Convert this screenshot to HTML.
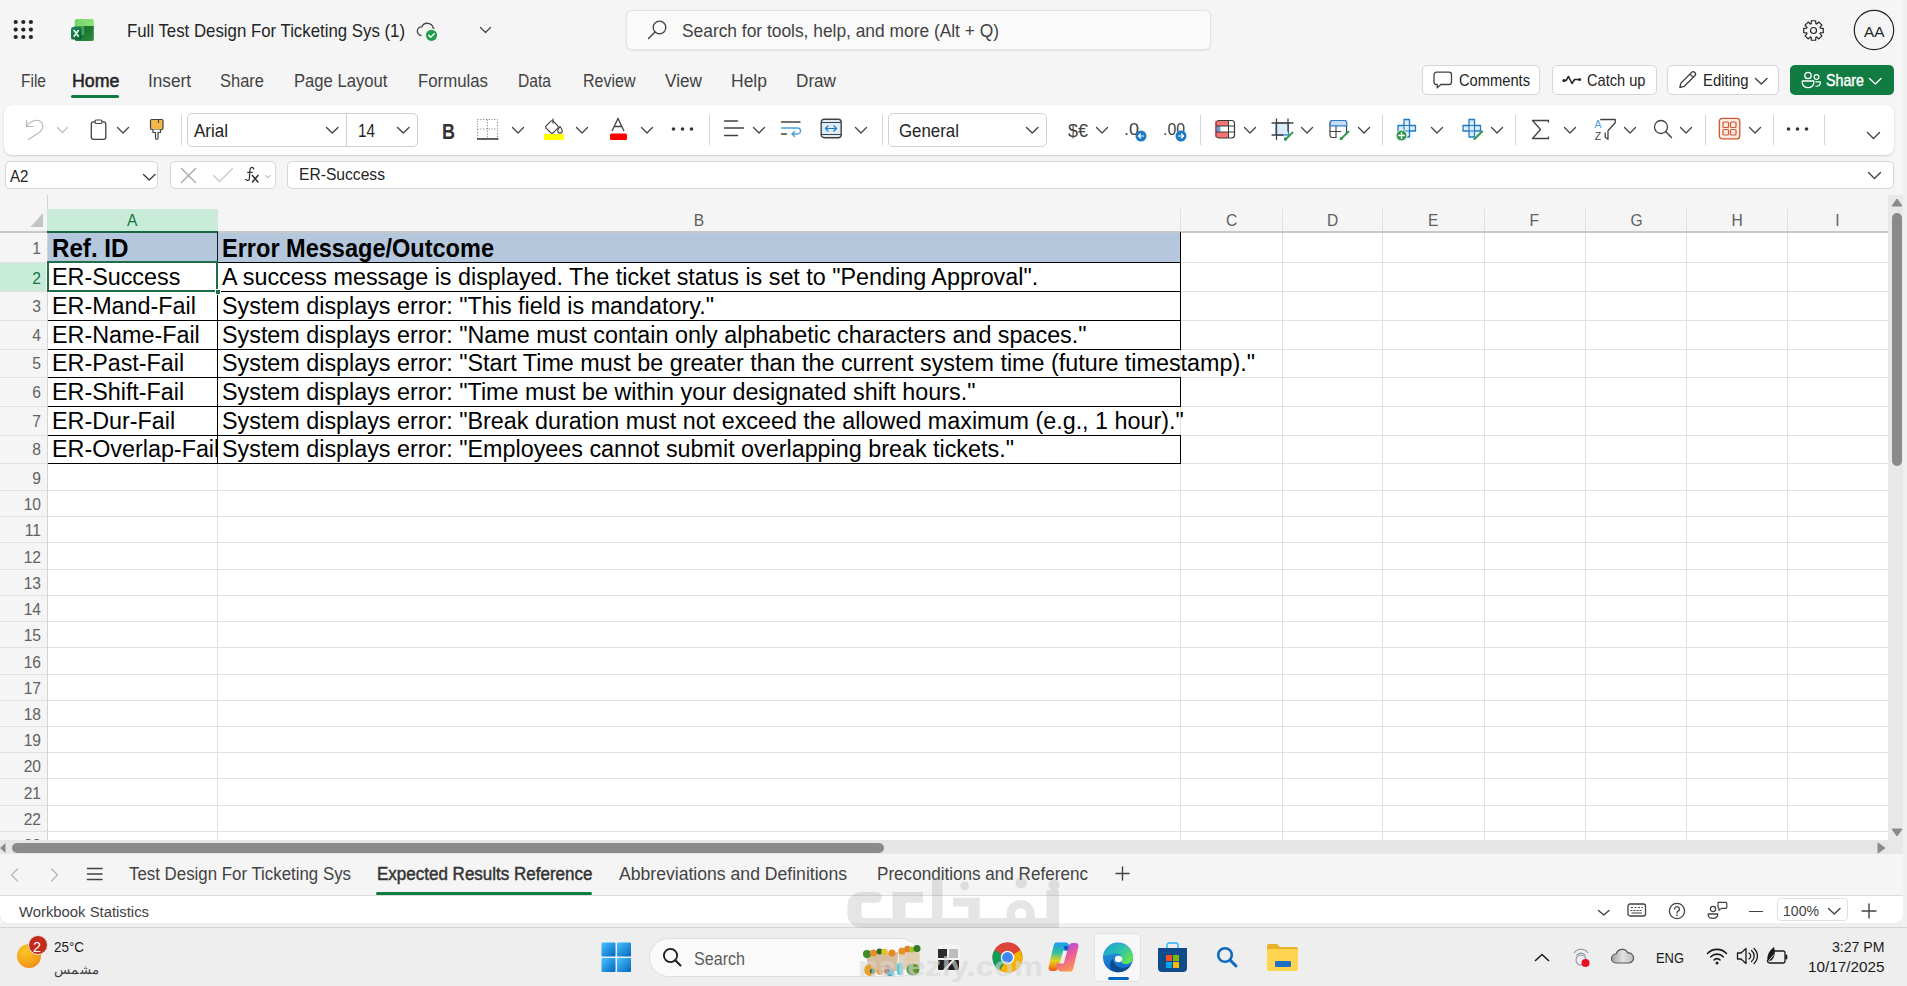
<!DOCTYPE html>
<html><head><meta charset="utf-8"><title>Excel</title><style>
*{box-sizing:border-box;margin:0;padding:0}
html,body{width:1907px;height:986px;overflow:hidden;background:#f5f5f5;font-family:"Liberation Sans",sans-serif;color:#242424;position:relative}
.a{position:absolute}
.t{position:absolute;white-space:nowrap;line-height:1;transform-origin:0 0}
svg{position:absolute;overflow:visible}
</style></head><body>
<svg style="left:0px;top:0px;" width="50" height="50" viewBox="0 0 50 50"><circle cx="15.7" cy="22" r="2.1" fill="#242424"/><circle cx="15.7" cy="29.6" r="2.1" fill="#242424"/><circle cx="15.7" cy="37" r="2.1" fill="#242424"/><circle cx="23.3" cy="22" r="2.1" fill="#242424"/><circle cx="23.3" cy="29.6" r="2.1" fill="#242424"/><circle cx="23.3" cy="37" r="2.1" fill="#242424"/><circle cx="30.9" cy="22" r="2.1" fill="#242424"/><circle cx="30.9" cy="29.6" r="2.1" fill="#242424"/><circle cx="30.9" cy="37" r="2.1" fill="#242424"/></svg>
<svg style="left:70px;top:18px;" width="26" height="26" viewBox="0 0 26 26"><defs><linearGradient id="xl1" x1="0" y1="0" x2="1" y2="0"><stop offset="0" stop-color="#74d36a"/><stop offset="1" stop-color="#8fe47c"/></linearGradient>
<linearGradient id="xl2" x1="0" y1="0" x2="1" y2="1"><stop offset="0" stop-color="#0f6b2a"/><stop offset="1" stop-color="#2f8b3b"/></linearGradient>
<linearGradient id="xl3" x1="0" y1="0" x2="1" y2="1"><stop offset="0" stop-color="#1e8a55"/><stop offset="1" stop-color="#0c5a32"/></linearGradient></defs>
<path d="M6.5 1 h15.5 a1.8 1.8 0 0 1 1.8 1.8 v5.2 h-19.1 v-5.2 a1.8 1.8 0 0 1 1.8 -1.8z" fill="url(#xl1)"/>
<path d="M4.7 8 h19.1 v13.3 a1.8 1.8 0 0 1 -1.8 1.8 h-15.5 a1.8 1.8 0 0 1 -1.8 -1.8z" fill="url(#xl2)"/>
<rect x="4.7" y="8" width="9.5" height="9" fill="#3fa55a"/>
<rect x="1" y="9" width="10.5" height="12.6" rx="2.2" fill="url(#xl3)"/>
<path d="M4.2 12.5 L8.3 18.3 M8.3 12.5 L4.2 18.3" stroke="#e8fff0" stroke-width="1.6" stroke-linecap="round"/></svg>
<div class="t" id="t0" style="left:127px;top:21.84px;font-size:18.5px;color:#242424;font-weight:normal;transform:scaleX(0.9084);">Full Test Design For Ticketing Sys (1)</div>
<svg style="left:416px;top:20px;" width="24" height="22" viewBox="0 0 24 22">
<path d="M5.5 15.5 a4.3 4.3 0 0 1 0.3 -8.6 a6 6 0 0 1 11.4 1.2 a3.6 3.6 0 0 1 1.3 .3" fill="none" stroke="#424242" stroke-width="1.3"/>
<circle cx="15.5" cy="15.3" r="5.6" fill="#1f9e4f"/>
<path d="M12.8 15.4 l1.9 1.9 l3.5 -3.5" fill="none" stroke="#fff" stroke-width="1.5" stroke-linecap="round" stroke-linejoin="round"/>
</svg>
<svg style="left:480px;top:27px;" width="11" height="6" viewBox="0 0 11 6"><path d="M0.5 0.5 L5.5 5.5 L10.5 0.5" fill="none" stroke="#424242" stroke-width="1.2" stroke-linecap="round" stroke-linejoin="round"/></svg>
<div class="a" style="left:626px;top:10px;width:585px;height:40px;background:#fafafa;border:1px solid #e3e3e3;border-radius:6px;box-shadow:0 1px 2px rgba(0,0,0,0.08)"></div>
<svg style="left:647px;top:20px;" width="22" height="22" viewBox="0 0 22 22"><circle cx="12.5" cy="7.5" r="6.3" fill="none" stroke="#424242" stroke-width="1.3"/><path d="M8 12 L1.5 18.5" stroke="#424242" stroke-width="1.4" stroke-linecap="round"/></svg>
<div class="t" id="t1" style="left:682px;top:22.44px;font-size:18.5px;color:#424242;font-weight:normal;transform:scaleX(0.9385);">Search for tools, help, and more (Alt + Q)</div>
<svg style="left:1803px;top:19.5px;" width="22" height="22" viewBox="0 0 22 22"><polygon points="20.26,8.32 20.26,12.68 17.31,12.83 16.97,13.67 18.94,15.86 15.86,18.94 13.67,16.97 12.83,17.31 12.68,20.26 8.32,20.26 8.17,17.31 7.33,16.97 5.14,18.94 2.06,15.86 4.03,13.67 3.69,12.83 0.74,12.68 0.74,8.32 3.69,8.17 4.03,7.33 2.06,5.14 5.14,2.06 7.33,4.03 8.17,3.69 8.32,0.74 12.68,0.74 12.83,3.69 13.67,4.03 15.86,2.06 18.94,5.14 16.97,7.33 17.31,8.17" fill="none" stroke="#242424" stroke-width="1.2" stroke-linejoin="round"/><circle cx="10.5" cy="10.5" r="3" fill="none" stroke="#242424" stroke-width="1.2"/></svg>
<svg style="left:1853px;top:9px;" width="42" height="42" viewBox="0 0 42 42"><circle cx="21" cy="21" r="19.7" fill="none" stroke="#242424" stroke-width="1.2"/></svg>
<div class="t" id="t2" style="left:1864px;top:24.00px;font-size:15px;color:#242424;font-weight:normal;transform:scaleX(1.0242);">AA</div>
<div class="t" id="t3" style="left:21px;top:72.69px;font-size:17.5px;color:#424242;font-weight:normal;transform:scaleX(0.8864);">File</div>
<div class="t" id="t4" style="left:71.5px;top:72.69px;font-size:17.5px;color:#242424;font-weight:normal;transform:scaleX(1.0174);-webkit-text-stroke:0.5px #242424;">Home</div>
<div class="t" id="t5" style="left:148px;top:72.69px;font-size:17.5px;color:#424242;font-weight:normal;transform:scaleX(0.9822);">Insert</div>
<div class="t" id="t6" style="left:220px;top:72.69px;font-size:17.5px;color:#424242;font-weight:normal;transform:scaleX(0.9421);">Share</div>
<div class="t" id="t7" style="left:293.5px;top:72.69px;font-size:17.5px;color:#424242;font-weight:normal;transform:scaleX(0.9514);">Page Layout</div>
<div class="t" id="t8" style="left:418px;top:72.69px;font-size:17.5px;color:#424242;font-weight:normal;transform:scaleX(0.9597);">Formulas</div>
<div class="t" id="t9" style="left:518px;top:72.69px;font-size:17.5px;color:#424242;font-weight:normal;transform:scaleX(0.8926);">Data</div>
<div class="t" id="t10" style="left:583px;top:72.69px;font-size:17.5px;color:#424242;font-weight:normal;transform:scaleX(0.9148);">Review</div>
<div class="t" id="t11" style="left:665px;top:72.69px;font-size:17.5px;color:#424242;font-weight:normal;transform:scaleX(0.9834);">View</div>
<div class="t" id="t12" style="left:731px;top:72.69px;font-size:17.5px;color:#424242;font-weight:normal;">Help</div>
<div class="t" id="t13" style="left:796px;top:72.69px;font-size:17.5px;color:#424242;font-weight:normal;transform:scaleX(0.9793);">Draw</div>
<div class="a" style="left:71px;top:95px;width:48px;height:3.2px;background:#107c41;border-radius:2px"></div>
<div class="a" style="left:4px;top:105px;width:1890px;height:50px;background:#fff;border-radius:8px;box-shadow:0 1px 2px rgba(0,0,0,0.14),0 0 1px rgba(0,0,0,0.10)"></div>
<svg style="left:25px;top:118px;" width="20" height="22" viewBox="0 0 20 22"><path d="M1.5 2.5 v6 h6.5" fill="none" stroke="#b8b8b8" stroke-width="1.2" stroke-linecap="round" stroke-linejoin="round"/><path d="M1.8 8.3 C4.5 3.5 11 0.5 15.5 3.5 C19 6 18.5 10.5 15.5 13.5 L3.5 21.5" fill="none" stroke="#b8b8b8" stroke-width="1.2" stroke-linecap="round"/></svg>
<svg style="left:57px;top:127.3px;" width="11" height="6" viewBox="0 0 11 6"><path d="M0.5 0.5 L5.5 5.5 L10.5 0.5" fill="none" stroke="#bdbdbd" stroke-width="1.2" stroke-linecap="round" stroke-linejoin="round"/></svg>
<svg style="left:90px;top:119px;" width="18" height="22" viewBox="0 0 18 22"><rect x="1.3" y="2.8" width="14.5" height="17.5" rx="2" fill="none" stroke="#424242" stroke-width="1.3"/><rect x="5" y="1" width="7" height="3.5" rx="1.2" fill="#fff" stroke="#424242" stroke-width="1.2"/></svg>
<svg style="left:117px;top:126.8px;" width="12" height="6.5" viewBox="0 0 12 6.5"><path d="M0.5 0.5 L6.0 6.0 L11.5 0.5" fill="none" stroke="#424242" stroke-width="1.3" stroke-linecap="round" stroke-linejoin="round"/></svg>
<svg style="left:149px;top:118px;" width="16" height="23" viewBox="0 0 16 23"><rect x="1.5" y="1.5" width="12.5" height="10" rx="1.2" fill="#f2b84a" stroke="#424242" stroke-width="1.2"/><path d="M9.5 1.5 v3.5" stroke="#424242" stroke-width="1.1"/><path d="M4 11.5 v3 h2.5 v5.5 a1.2 1.2 0 0 0 2.5 0 v-5.5 h2.5 v-3" fill="#fff" stroke="#424242" stroke-width="1.2" stroke-linejoin="round"/></svg>
<div class="a" style="left:181px;top:115px;width:1px;height:30px;background:#d6d6d6"></div>
<div class="a" style="left:187px;top:113px;width:231px;height:34px;border:1px solid #d1d1d1;border-radius:5px;background:#fff"></div>
<div class="a" style="left:346px;top:114px;width:1px;height:32px;background:#d1d1d1"></div>
<div class="t" id="t14" style="left:193.5px;top:122.44px;font-size:18.5px;color:#242424;font-weight:normal;transform:scaleX(0.9185);">Arial</div>
<svg style="left:325.5px;top:127.3px;" width="12.5" height="6.5" viewBox="0 0 12.5 6.5"><path d="M0.5 0.5 L6.25 6.0 L12.0 0.5" fill="none" stroke="#424242" stroke-width="1.4" stroke-linecap="round" stroke-linejoin="round"/></svg>
<div class="t" id="t15" style="left:358px;top:122.44px;font-size:18.5px;color:#242424;font-weight:normal;transform:scaleX(0.8261);">14</div>
<svg style="left:396.5px;top:127.3px;" width="12.5" height="6.5" viewBox="0 0 12.5 6.5"><path d="M0.5 0.5 L6.25 6.0 L12.0 0.5" fill="none" stroke="#424242" stroke-width="1.4" stroke-linecap="round" stroke-linejoin="round"/></svg>
<div class="t" id="t16" style="left:442px;top:120.68px;font-size:22px;color:#333;font-weight:bold;transform:scaleX(0.8181);">B</div>
<svg style="left:476px;top:118px;" width="24" height="24" viewBox="0 0 24 24"><g stroke="#8a8a8a" stroke-width="1" stroke-dasharray="1.2 1.6" fill="none"><rect x="1.5" y="1.5" width="20" height="19"/><path d="M11.5 1.5 v19 M1.5 11 h20"/></g><path d="M1 21 h21.5" stroke="#424242" stroke-width="1.6"/></svg>
<svg style="left:512px;top:127.3px;" width="12" height="6.5" viewBox="0 0 12 6.5"><path d="M0.5 0.5 L6.0 6.0 L11.5 0.5" fill="none" stroke="#424242" stroke-width="1.3" stroke-linecap="round" stroke-linejoin="round"/></svg>
<svg style="left:543px;top:117px;" width="22" height="25" viewBox="0 0 22 25"><path d="M10 1.5 v5" stroke="#424242" stroke-width="1.2"/><rect x="4" y="5" width="10" height="10" rx="2" transform="rotate(45 9 10)" fill="none" stroke="#424242" stroke-width="1.2"/><path d="M17 9.5 c-1.5 2 -2.3 3.3 -2.3 4.3 a2.3 2.3 0 0 0 4.6 0 c0 -1 -.8 -2.3 -2.3 -4.3z" fill="none" stroke="#424242" stroke-width="1.1"/><rect x="1" y="17" width="20" height="6" rx="1" fill="#ffff00"/></svg>
<svg style="left:576px;top:127.3px;" width="12" height="6.5" viewBox="0 0 12 6.5"><path d="M0.5 0.5 L6.0 6.0 L11.5 0.5" fill="none" stroke="#424242" stroke-width="1.3" stroke-linecap="round" stroke-linejoin="round"/></svg>
<svg style="left:608px;top:117px;" width="22" height="25" viewBox="0 0 22 25"><path d="M4 14 L10 1.5 L16 14 M6.2 9.5 h7.6" fill="none" stroke="#424242" stroke-width="1.3"/><rect x="2" y="16.5" width="17" height="6.5" rx="1.5" fill="#ff0000"/></svg>
<svg style="left:641px;top:127.3px;" width="12" height="6.5" viewBox="0 0 12 6.5"><path d="M0.5 0.5 L6.0 6.0 L11.5 0.5" fill="none" stroke="#424242" stroke-width="1.3" stroke-linecap="round" stroke-linejoin="round"/></svg>
<svg style="left:670px;top:126px;" width="26" height="6" viewBox="0 0 26 6"><circle cx="3.5" cy="3" r="1.8" fill="#333"/><circle cx="12.5" cy="3" r="1.8" fill="#333"/><circle cx="21.5" cy="3" r="1.8" fill="#333"/></svg>
<div class="a" style="left:709px;top:115px;width:1px;height:30px;background:#d6d6d6"></div>
<svg style="left:723px;top:119px;" width="22" height="20" viewBox="0 0 22 20"><path d="M1.5 2 h13 M1.5 9 h19 M1.5 16.5 h13" stroke="#424242" stroke-width="1.4" stroke-linecap="round"/></svg>
<svg style="left:753px;top:127.3px;" width="12" height="6.5" viewBox="0 0 12 6.5"><path d="M0.5 0.5 L6.0 6.0 L11.5 0.5" fill="none" stroke="#424242" stroke-width="1.3" stroke-linecap="round" stroke-linejoin="round"/></svg>
<svg style="left:780px;top:120px;" width="24" height="20" viewBox="0 0 24 20"><path d="M1.5 2 h18.5 M1.5 14 h5" stroke="#424242" stroke-width="1.4" stroke-linecap="round"/><path d="M1.5 8 h16 a3 3 0 0 1 0 6 h-5.5 M14.5 11.5 l-2.5 2.5 l2.5 2.5" fill="none" stroke="#4aa0d8" stroke-width="1.4" stroke-linecap="round" stroke-linejoin="round"/></svg>
<svg style="left:820px;top:118px;" width="24" height="22" viewBox="0 0 24 22"><rect x="1.2" y="1.2" width="20" height="18.5" rx="3" fill="#dcecf8" stroke="#424242" stroke-width="1.4"/><path d="M1.2 4.5 h20 M1.2 16.5 h20" stroke="#424242" stroke-width="1.2"/><path d="M5.5 10.5 h11 M8 8 l-2.5 2.5 l2.5 2.5 M14 8 l2.5 2.5 l-2.5 2.5" fill="none" stroke="#1f7ac4" stroke-width="1.2" stroke-linecap="round" stroke-linejoin="round"/></svg>
<svg style="left:855px;top:127.3px;" width="12" height="6.5" viewBox="0 0 12 6.5"><path d="M0.5 0.5 L6.0 6.0 L11.5 0.5" fill="none" stroke="#424242" stroke-width="1.3" stroke-linecap="round" stroke-linejoin="round"/></svg>
<div class="a" style="left:882px;top:115px;width:1px;height:30px;background:#d6d6d6"></div>
<div class="a" style="left:888px;top:113px;width:159px;height:34px;border:1px solid #d1d1d1;border-radius:5px;background:#fff"></div>
<div class="t" id="t17" style="left:898.5px;top:122.44px;font-size:18.5px;color:#242424;font-weight:normal;transform:scaleX(0.9115);">General</div>
<svg style="left:1026px;top:127.3px;" width="12.5" height="6.5" viewBox="0 0 12.5 6.5"><path d="M0.5 0.5 L6.25 6.0 L12.0 0.5" fill="none" stroke="#424242" stroke-width="1.4" stroke-linecap="round" stroke-linejoin="round"/></svg>
<div class="t" id="t18" style="left:1067.5px;top:121.42px;font-size:19px;color:#424242;font-weight:normal;transform:scaleX(0.9460);">$€</div>
<svg style="left:1096px;top:127.3px;" width="12" height="6.5" viewBox="0 0 12 6.5"><path d="M0.5 0.5 L6.0 6.0 L11.5 0.5" fill="none" stroke="#424242" stroke-width="1.3" stroke-linecap="round" stroke-linejoin="round"/></svg>
<div class="t" id="t19" style="left:1124px;top:121.11px;font-size:17px;color:#424242;font-weight:normal;transform:scaleX(1.0573);">.0</div>
<svg style="left:1135px;top:130px;" width="12" height="12" viewBox="0 0 12 12"><circle cx="6" cy="6" r="5.5" fill="#1f7ac4"/><path d="M8.5 6 h-5 M5.5 4 l-2 2 l2 2" fill="none" stroke="#fff" stroke-width="1.2" stroke-linecap="round" stroke-linejoin="round"/></svg>
<div class="t" id="t20" style="left:1163px;top:121.11px;font-size:17px;color:#424242;font-weight:normal;transform:scaleX(0.9306);">.00</div>
<svg style="left:1175px;top:130px;" width="12" height="12" viewBox="0 0 12 12"><circle cx="6" cy="6" r="5.5" fill="#1f7ac4"/><path d="M3.5 6 h5 M6.5 4 l2 2 l-2 2" fill="none" stroke="#fff" stroke-width="1.2" stroke-linecap="round" stroke-linejoin="round"/></svg>
<div class="a" style="left:1200px;top:115px;width:1px;height:30px;background:#d6d6d6"></div>
<svg style="left:1215px;top:119px;" width="21" height="21" viewBox="0 0 21 21"><rect x="1" y="1.5" width="18.5" height="17.5" rx="3" fill="#fff"/><path d="M4 1.5 h9.5 v5.5 h-12.5 v-2.5 a3 3 0 0 1 3 -3z M1 13 h12.5 v6 h-9.5 a3 3 0 0 1 -3 -3z" fill="#f47373"/><rect x="1.4" y="7" width="4" height="6" fill="#5aa7e0"/><rect x="1" y="1.5" width="18.5" height="17.5" rx="3" fill="none" stroke="#3a3a3a" stroke-width="1.2"/><path d="M1 1.8 v16.5" stroke="#d9484c" stroke-width="1.3"/><path d="M1 7 h18.5 M1 13 h18.5 M13.5 1.5 v17.5" stroke="#3a3a3a" stroke-width="1"/></svg>
<svg style="left:1244px;top:127.3px;" width="12" height="6.5" viewBox="0 0 12 6.5"><path d="M0.5 0.5 L6.0 6.0 L11.5 0.5" fill="none" stroke="#424242" stroke-width="1.3" stroke-linecap="round" stroke-linejoin="round"/></svg>
<svg style="left:1271px;top:118px;" width="24" height="24" viewBox="0 0 24 24"><rect x="5" y="5" width="12.5" height="12" fill="#dcecf8" stroke="#2b7cd0" stroke-width="1.2"/><path d="M5.5 1 v20.5 M17 1 v12 M1 5 h21 M1 17 h11" stroke="#424242" stroke-width="1.3" stroke-linecap="round"/><path d="M14.5 21.5 l7 -7" stroke="#2e9a4d" stroke-width="1.8" stroke-linecap="round"/><circle cx="14.5" cy="21" r="1.7" fill="#2e9a4d"/></svg>
<svg style="left:1301px;top:127.3px;" width="12" height="6.5" viewBox="0 0 12 6.5"><path d="M0.5 0.5 L6.0 6.0 L11.5 0.5" fill="none" stroke="#424242" stroke-width="1.3" stroke-linecap="round" stroke-linejoin="round"/></svg>
<svg style="left:1329px;top:119px;" width="23" height="23" viewBox="0 0 23 23"><path d="M3.5 1.5 h11.5 a2.5 2.5 0 0 1 2.5 2.5 v11.5 M1 4 a2.5 2.5 0 0 1 2.5 -2.5" fill="none" stroke="#424242" stroke-width="1.2"/><rect x="1" y="13" width="0.1" height="0.1"/><path d="M1 4 v12 a2.5 2.5 0 0 0 2.5 2.5 h4" fill="none" stroke="#424242" stroke-width="1.2"/><path d="M1.2 4 a2.5 2.5 0 0 1 2.5 -2.5 h11.5 a2.5 2.5 0 0 1 2.5 2.5 v2.8 h-16.5z" fill="#c7def2" stroke="#2b7cd0" stroke-width="1.2"/><path d="M7 7 v11.5 M1.2 12.5 h11" stroke="#424242" stroke-width="1.1"/><path d="M12 20 l7.5 -7.5" stroke="#2e9a4d" stroke-width="1.8" stroke-linecap="round"/><circle cx="12.2" cy="19.6" r="1.6" fill="#2e9a4d"/></svg>
<svg style="left:1358px;top:127.3px;" width="12" height="6.5" viewBox="0 0 12 6.5"><path d="M0.5 0.5 L6.0 6.0 L11.5 0.5" fill="none" stroke="#424242" stroke-width="1.3" stroke-linecap="round" stroke-linejoin="round"/></svg>
<div class="a" style="left:1382px;top:115px;width:1px;height:30px;background:#d6d6d6"></div>
<svg style="left:1395px;top:118px;" width="25" height="24" viewBox="0 0 25 24"><path d="M9 1.5 h5.5 v6 h6 v5.5 h-6 v6 h-5.5 v-6 h-6 v-5.5 h6z" fill="#dcecf8" stroke="#1f7ac4" stroke-width="1.3" stroke-linejoin="round"/><path d="M9 7.5 h5.5 v5.5 h-5.5z" fill="none" stroke="#1f7ac4" stroke-width="1.1"/><circle cx="6.5" cy="17.5" r="5.5" fill="#2e9a4d" stroke="#fff" stroke-width="1"/><path d="M6.5 14.8 v5.4 M3.8 17.5 h5.4" stroke="#fff" stroke-width="1.4" stroke-linecap="round"/></svg>
<svg style="left:1431px;top:127.3px;" width="12" height="6.5" viewBox="0 0 12 6.5"><path d="M0.5 0.5 L6.0 6.0 L11.5 0.5" fill="none" stroke="#424242" stroke-width="1.3" stroke-linecap="round" stroke-linejoin="round"/></svg>
<svg style="left:1461px;top:118px;" width="24" height="24" viewBox="0 0 24 24"><path d="M8 1.5 h5.5 v6 h6 v5.5 h-6 v6 h-5.5 v-6 h-6 v-5.5 h6z" fill="#dcecf8" stroke="#1f7ac4" stroke-width="1.3" stroke-linejoin="round"/><path d="M8 7.5 h5.5 v5.5 h-5.5z" fill="none" stroke="#1f7ac4" stroke-width="1.1"/><path d="M13.5 21 l7.5 -7.5" stroke="#2e9a4d" stroke-width="2.2" stroke-linecap="round"/></svg>
<svg style="left:1491px;top:127.3px;" width="12" height="6.5" viewBox="0 0 12 6.5"><path d="M0.5 0.5 L6.0 6.0 L11.5 0.5" fill="none" stroke="#424242" stroke-width="1.3" stroke-linecap="round" stroke-linejoin="round"/></svg>
<div class="a" style="left:1515px;top:115px;width:1px;height:30px;background:#d6d6d6"></div>
<svg style="left:1531px;top:119px;" width="20" height="21" viewBox="0 0 20 21"><path d="M17.5 3.5 v-2 h-16 l8 9 l-8 9 h16 v-2" fill="none" stroke="#424242" stroke-width="1.3" stroke-linejoin="round"/></svg>
<svg style="left:1564px;top:127.3px;" width="12" height="6.5" viewBox="0 0 12 6.5"><path d="M0.5 0.5 L6.0 6.0 L11.5 0.5" fill="none" stroke="#424242" stroke-width="1.3" stroke-linecap="round" stroke-linejoin="round"/></svg>
<svg style="left:1594px;top:117px;" width="24" height="24" viewBox="0 0 24 24"><text x="0.6" y="11" font-family="Liberation Sans" font-size="10.5" fill="#4aa0d8">A</text><text x="0.8" y="22.6" font-family="Liberation Sans" font-size="10.5" fill="#424242">Z</text><path d="M6.2 2.5 h15 v3.2 l-7.2 8 v8.6 l-2.8 -2.4 v-4.5" fill="none" stroke="#424242" stroke-width="1.3" stroke-linejoin="round"/></svg>
<svg style="left:1624px;top:127.3px;" width="12" height="6.5" viewBox="0 0 12 6.5"><path d="M0.5 0.5 L6.0 6.0 L11.5 0.5" fill="none" stroke="#424242" stroke-width="1.3" stroke-linecap="round" stroke-linejoin="round"/></svg>
<svg style="left:1653px;top:119px;" width="20" height="20" viewBox="0 0 20 20"><circle cx="8" cy="8" r="6.5" fill="none" stroke="#424242" stroke-width="1.3"/><path d="M12.8 12.8 L18.5 18.5" stroke="#424242" stroke-width="1.4" stroke-linecap="round"/></svg>
<svg style="left:1680px;top:127.3px;" width="12" height="6.5" viewBox="0 0 12 6.5"><path d="M0.5 0.5 L6.0 6.0 L11.5 0.5" fill="none" stroke="#424242" stroke-width="1.3" stroke-linecap="round" stroke-linejoin="round"/></svg>
<div class="a" style="left:1705px;top:115px;width:1px;height:30px;background:#d6d6d6"></div>
<svg style="left:1718px;top:117px;" width="24" height="24" viewBox="0 0 24 24"><rect x="1.3" y="1.3" width="20.5" height="20.5" rx="3" fill="#fdece4" stroke="#d65532" stroke-width="1.3"/><g fill="none" stroke="#d65532" stroke-width="1.2"><rect x="5" y="5" width="5.5" height="5.5" rx="1"/><rect x="12.5" y="5" width="5.5" height="5.5" rx="1"/><rect x="5" y="12.5" width="5.5" height="5.5" rx="1"/><rect x="12.5" y="12.5" width="5.5" height="5.5" rx="1"/></g></svg>
<svg style="left:1749px;top:127.3px;" width="12" height="6.5" viewBox="0 0 12 6.5"><path d="M0.5 0.5 L6.0 6.0 L11.5 0.5" fill="none" stroke="#424242" stroke-width="1.3" stroke-linecap="round" stroke-linejoin="round"/></svg>
<div class="a" style="left:1773px;top:115px;width:1px;height:30px;background:#d6d6d6"></div>
<svg style="left:1785px;top:126px;" width="26" height="6" viewBox="0 0 26 6"><circle cx="3.5" cy="3" r="1.8" fill="#333"/><circle cx="12.5" cy="3" r="1.8" fill="#333"/><circle cx="21.5" cy="3" r="1.8" fill="#333"/></svg>
<div class="a" style="left:1824px;top:115px;width:1px;height:30px;background:#d6d6d6"></div>
<svg style="left:1867px;top:131.5px;" width="13" height="7" viewBox="0 0 13 7"><path d="M0.5 0.5 L6.5 6.5 L12.5 0.5" fill="none" stroke="#424242" stroke-width="1.4" stroke-linecap="round" stroke-linejoin="round"/></svg>
<div class="a" style="left:5px;top:161px;width:153px;height:28px;border:1px solid #d6d6d6;border-radius:5px;background:#fff"></div>
<div class="t" id="t21" style="left:10px;top:168.76px;font-size:16px;color:#242424;font-weight:normal;transform:scaleX(0.9449);">A2</div>
<svg style="left:143px;top:174px;" width="12.5" height="6.5" viewBox="0 0 12.5 6.5"><path d="M0.5 0.5 L6.25 6.0 L12.0 0.5" fill="none" stroke="#424242" stroke-width="1.4" stroke-linecap="round" stroke-linejoin="round"/></svg>
<div class="a" style="left:170px;top:161px;width:106px;height:28px;border:1px solid #d6d6d6;border-radius:5px;background:#fff"></div>
<svg style="left:180px;top:167px;" width="17" height="17" viewBox="0 0 17 17"><path d="M1.5 1.5 L15.5 15.5 M15.5 1.5 L1.5 15.5" stroke="#a6a6a6" stroke-width="1.3" stroke-linecap="round"/></svg>
<svg style="left:212px;top:167px;" width="22" height="16" viewBox="0 0 22 16"><path d="M1.5 8.5 L7.5 14.5 L20.5 1.5" fill="none" stroke="#c8c8c8" stroke-width="1.3" stroke-linecap="round"/></svg>
<svg style="left:243px;top:165px;" width="18" height="20" viewBox="0 0 18 20"><path d="M10.8 4 C10.3 2.2 8.3 1.8 7.4 3.5 C6.7 5 6.5 8 6.5 12.5 C6.5 15.5 5 16.2 2.6 14.6" fill="none" stroke="#333" stroke-width="1.25" stroke-linecap="round"/><path d="M4.2 7.4 h5.6" stroke="#333" stroke-width="1.2"/><path d="M9.4 10.4 L15 17 M15 10.4 L9.4 17" stroke="#333" stroke-width="1.5" stroke-linecap="round"/></svg>
<svg style="left:265px;top:175px;" width="5.5" height="3.5" viewBox="0 0 5.5 3.5"><path d="M0.5 0.5 L2.75 3.0 L5.0 0.5" fill="none" stroke="#9e9e9e" stroke-width="1" stroke-linecap="round" stroke-linejoin="round"/></svg>
<div class="a" style="left:287px;top:161px;width:1607px;height:28px;border:1px solid #d6d6d6;border-radius:5px;background:#fff"></div>
<div class="t" id="t22" style="left:298.5px;top:166.66px;font-size:16px;color:#242424;font-weight:normal;transform:scaleX(0.9769);">ER-Success</div>
<svg style="left:1868px;top:172px;" width="13" height="7" viewBox="0 0 13 7"><path d="M0.5 0.5 L6.5 6.5 L12.5 0.5" fill="none" stroke="#424242" stroke-width="1.4" stroke-linecap="round" stroke-linejoin="round"/></svg>
<div class="a" style="left:48px;top:232px;width:1840px;height:608px;background:#fff"></div>
<div class="a" style="left:217px;top:209px;width:1px;height:631px;background:#e1e1e1"></div>
<div class="a" style="left:1180px;top:209px;width:1px;height:631px;background:#e1e1e1"></div>
<div class="a" style="left:1282px;top:209px;width:1px;height:631px;background:#e1e1e1"></div>
<div class="a" style="left:1382px;top:209px;width:1px;height:631px;background:#e1e1e1"></div>
<div class="a" style="left:1484px;top:209px;width:1px;height:631px;background:#e1e1e1"></div>
<div class="a" style="left:1585px;top:209px;width:1px;height:631px;background:#e1e1e1"></div>
<div class="a" style="left:1686px;top:209px;width:1px;height:631px;background:#e1e1e1"></div>
<div class="a" style="left:1787px;top:209px;width:1px;height:631px;background:#e1e1e1"></div>
<div class="a" style="left:0px;top:262px;width:1888px;height:1px;background:#e1e1e1"></div>
<div class="a" style="left:0px;top:291px;width:1888px;height:1px;background:#e1e1e1"></div>
<div class="a" style="left:0px;top:320px;width:1888px;height:1px;background:#e1e1e1"></div>
<div class="a" style="left:0px;top:349px;width:1888px;height:1px;background:#e1e1e1"></div>
<div class="a" style="left:0px;top:377px;width:1888px;height:1px;background:#e1e1e1"></div>
<div class="a" style="left:0px;top:406px;width:1888px;height:1px;background:#e1e1e1"></div>
<div class="a" style="left:0px;top:435px;width:1888px;height:1px;background:#e1e1e1"></div>
<div class="a" style="left:0px;top:463px;width:1888px;height:1px;background:#e1e1e1"></div>
<div class="a" style="left:0px;top:490px;width:1888px;height:1px;background:#e1e1e1"></div>
<div class="a" style="left:0px;top:516px;width:1888px;height:1px;background:#e1e1e1"></div>
<div class="a" style="left:0px;top:542px;width:1888px;height:1px;background:#e1e1e1"></div>
<div class="a" style="left:0px;top:569px;width:1888px;height:1px;background:#e1e1e1"></div>
<div class="a" style="left:0px;top:595px;width:1888px;height:1px;background:#e1e1e1"></div>
<div class="a" style="left:0px;top:621px;width:1888px;height:1px;background:#e1e1e1"></div>
<div class="a" style="left:0px;top:647px;width:1888px;height:1px;background:#e1e1e1"></div>
<div class="a" style="left:0px;top:674px;width:1888px;height:1px;background:#e1e1e1"></div>
<div class="a" style="left:0px;top:700px;width:1888px;height:1px;background:#e1e1e1"></div>
<div class="a" style="left:0px;top:726px;width:1888px;height:1px;background:#e1e1e1"></div>
<div class="a" style="left:0px;top:752px;width:1888px;height:1px;background:#e1e1e1"></div>
<div class="a" style="left:0px;top:778px;width:1888px;height:1px;background:#e1e1e1"></div>
<div class="a" style="left:0px;top:805px;width:1888px;height:1px;background:#e1e1e1"></div>
<div class="a" style="left:0px;top:831px;width:1888px;height:1px;background:#e1e1e1"></div>
<div class="a" style="left:0px;top:231px;width:1888px;height:1.6px;background:#c8c8c8"></div>
<div class="a" style="left:47px;top:195px;width:1px;height:645px;background:#d4d4d4"></div>
<svg style="left:30px;top:212px;" width="14" height="16" viewBox="0 0 14 16"><path d="M13 1 L13 15 L0.5 15z" fill="#c4c4c4"/></svg>
<div class="a" style="left:47px;top:209px;width:170px;height:22px;background:#c8ecd9"></div>
<div class="a" style="left:47px;top:230.5px;width:171px;height:2.4px;background:#1a6644"></div>
<div class="t" id="t23" style="left:127.0px;top:212.99px;font-size:15.6px;color:#0e7a3e;font-weight:normal;width:10px;text-align:center;">A</div>
<div class="t" id="t24" style="left:693.75px;top:212.99px;font-size:15.6px;color:#616161;font-weight:normal;width:10px;text-align:center;">B</div>
<div class="t" id="t25" style="left:1226.0px;top:212.99px;font-size:15.6px;color:#616161;font-weight:normal;width:10px;text-align:center;">C</div>
<div class="t" id="t26" style="left:1327.0px;top:212.99px;font-size:15.6px;color:#616161;font-weight:normal;width:10px;text-align:center;">D</div>
<div class="t" id="t27" style="left:1428.0px;top:212.99px;font-size:15.6px;color:#616161;font-weight:normal;width:10px;text-align:center;">E</div>
<div class="t" id="t28" style="left:1529.25px;top:212.99px;font-size:15.6px;color:#616161;font-weight:normal;width:10px;text-align:center;">F</div>
<div class="t" id="t29" style="left:1630.5px;top:212.99px;font-size:15.6px;color:#616161;font-weight:normal;width:10px;text-align:center;">G</div>
<div class="t" id="t30" style="left:1731.5px;top:212.99px;font-size:15.6px;color:#616161;font-weight:normal;width:10px;text-align:center;">H</div>
<div class="t" id="t31" style="left:1832.5px;top:212.99px;font-size:15.6px;color:#616161;font-weight:normal;width:10px;text-align:center;">I</div>
<div class="t" id="t32" style="left:20px;top:241.29px;font-size:15.6px;color:#616161;font-weight:normal;width:21px;text-align:right;">1</div>
<div class="t" id="t33" style="left:20px;top:270.29px;font-size:15.6px;color:#0e7a3e;font-weight:normal;width:21px;text-align:right;">2</div>
<div class="t" id="t34" style="left:20px;top:299.29px;font-size:15.6px;color:#616161;font-weight:normal;width:21px;text-align:right;">3</div>
<div class="t" id="t35" style="left:20px;top:328.29px;font-size:15.6px;color:#616161;font-weight:normal;width:21px;text-align:right;">4</div>
<div class="t" id="t36" style="left:20px;top:356.29px;font-size:15.6px;color:#616161;font-weight:normal;width:21px;text-align:right;">5</div>
<div class="t" id="t37" style="left:20px;top:385.29px;font-size:15.6px;color:#616161;font-weight:normal;width:21px;text-align:right;">6</div>
<div class="t" id="t38" style="left:20px;top:414.29px;font-size:15.6px;color:#616161;font-weight:normal;width:21px;text-align:right;">7</div>
<div class="t" id="t39" style="left:20px;top:442.29px;font-size:15.6px;color:#616161;font-weight:normal;width:21px;text-align:right;">8</div>
<div class="t" id="t40" style="left:20px;top:471.49px;font-size:15.6px;color:#616161;font-weight:normal;width:21px;text-align:right;">9</div>
<div class="t" id="t41" style="left:20px;top:497.49px;font-size:15.6px;color:#616161;font-weight:normal;width:21px;text-align:right;">10</div>
<div class="t" id="t42" style="left:20px;top:523.49px;font-size:15.6px;color:#616161;font-weight:normal;width:21px;text-align:right;">11</div>
<div class="t" id="t43" style="left:20px;top:550.49px;font-size:15.6px;color:#616161;font-weight:normal;width:21px;text-align:right;">12</div>
<div class="t" id="t44" style="left:20px;top:576.49px;font-size:15.6px;color:#616161;font-weight:normal;width:21px;text-align:right;">13</div>
<div class="t" id="t45" style="left:20px;top:602.49px;font-size:15.6px;color:#616161;font-weight:normal;width:21px;text-align:right;">14</div>
<div class="t" id="t46" style="left:20px;top:628.49px;font-size:15.6px;color:#616161;font-weight:normal;width:21px;text-align:right;">15</div>
<div class="t" id="t47" style="left:20px;top:655.49px;font-size:15.6px;color:#616161;font-weight:normal;width:21px;text-align:right;">16</div>
<div class="t" id="t48" style="left:20px;top:681.49px;font-size:15.6px;color:#616161;font-weight:normal;width:21px;text-align:right;">17</div>
<div class="t" id="t49" style="left:20px;top:707.49px;font-size:15.6px;color:#616161;font-weight:normal;width:21px;text-align:right;">18</div>
<div class="t" id="t50" style="left:20px;top:733.49px;font-size:15.6px;color:#616161;font-weight:normal;width:21px;text-align:right;">19</div>
<div class="t" id="t51" style="left:20px;top:759.49px;font-size:15.6px;color:#616161;font-weight:normal;width:21px;text-align:right;">20</div>
<div class="t" id="t52" style="left:20px;top:786.49px;font-size:15.6px;color:#616161;font-weight:normal;width:21px;text-align:right;">21</div>
<div class="t" id="t53" style="left:20px;top:812.49px;font-size:15.6px;color:#616161;font-weight:normal;width:21px;text-align:right;">22</div>
<div class="t" id="t54" style="left:20px;top:837.79px;font-size:15.6px;color:#616161;font-weight:normal;width:21px;text-align:right;">23</div>
<div class="a" style="left:0px;top:262.5px;width:46px;height:28.5px;background:#c8ecd9"></div>
<div class="t" id="t55" style="left:20px;top:270.99px;font-size:15.6px;color:#0e7a3e;font-weight:normal;width:21px;text-align:right;">2</div>
<div class="a" style="left:48px;top:232.5px;width:1132.5px;height:29.5px;background:#b4c7dd"></div>
<div class="a" style="left:48px;top:261.5px;width:1133px;height:1.2px;background:#000"></div>
<div class="a" style="left:48px;top:290.5px;width:1133px;height:1.2px;background:#000"></div>
<div class="a" style="left:48px;top:319.5px;width:1133px;height:1.2px;background:#000"></div>
<div class="a" style="left:48px;top:348.5px;width:1133px;height:1.2px;background:#000"></div>
<div class="a" style="left:48px;top:376.5px;width:1133px;height:1.2px;background:#000"></div>
<div class="a" style="left:48px;top:405.5px;width:1133px;height:1.2px;background:#000"></div>
<div class="a" style="left:48px;top:434.5px;width:1133px;height:1.2px;background:#000"></div>
<div class="a" style="left:48px;top:462.5px;width:1133px;height:1.2px;background:#000"></div>
<div class="a" style="left:217px;top:262px;width:1.2px;height:202px;background:#000"></div>
<div class="a" style="left:217px;top:232px;width:1.2px;height:30px;background:#1a1a1a"></div>
<div class="a" style="left:1180px;top:232px;width:1.2px;height:31px;background:#000"></div>
<div class="a" style="left:1180px;top:262px;width:1.2px;height:30px;background:#000"></div>
<div class="a" style="left:1180px;top:291px;width:1.2px;height:30px;background:#000"></div>
<div class="a" style="left:1180px;top:320px;width:1.2px;height:30px;background:#000"></div>
<div class="a" style="left:1180px;top:377px;width:1.2px;height:30px;background:#000"></div>
<div class="a" style="left:1180px;top:435px;width:1.2px;height:29px;background:#000"></div>
<div class="a" style="left:1182px;top:350px;width:99px;height:27px;background:#fff"></div>
<div class="a" style="left:1182px;top:407px;width:30px;height:28px;background:#fff"></div>
<div class="t" id="t56" style="left:52px;top:235.54px;font-size:25px;color:#000;font-weight:bold;transform:scaleX(0.9661);">Ref. ID</div>
<div class="t" id="t57" style="left:222px;top:235.54px;font-size:25px;color:#000;font-weight:bold;transform:scaleX(0.9412);">Error Message/Outcome</div>
<div class="t" id="t58" style="left:52px;top:265.65px;font-size:23.33px;color:#000;font-weight:normal;">ER-Success</div>
<div class="t" id="t59" style="left:222px;top:265.65px;font-size:23.33px;color:#000;font-weight:normal;">A success message is displayed. The ticket status is set to "Pending Approval".</div>
<div class="t" id="t60" style="left:52px;top:294.65px;font-size:23.33px;color:#000;font-weight:normal;">ER-Mand-Fail</div>
<div class="t" id="t61" style="left:222px;top:294.65px;font-size:23.33px;color:#000;font-weight:normal;">System displays error: "This field is mandatory."</div>
<div class="t" id="t62" style="left:52px;top:323.65px;font-size:23.33px;color:#000;font-weight:normal;">ER-Name-Fail</div>
<div class="t" id="t63" style="left:222px;top:323.65px;font-size:23.33px;color:#000;font-weight:normal;">System displays error: "Name must contain only alphabetic characters and spaces."</div>
<div class="t" id="t64" style="left:52px;top:351.65px;font-size:23.33px;color:#000;font-weight:normal;">ER-Past-Fail</div>
<div class="t" id="t65" style="left:222px;top:351.65px;font-size:23.33px;color:#000;font-weight:normal;">System displays error: "Start Time must be greater than the current system time (future timestamp)."</div>
<div class="t" id="t66" style="left:52px;top:380.65px;font-size:23.33px;color:#000;font-weight:normal;">ER-Shift-Fail</div>
<div class="t" id="t67" style="left:222px;top:380.65px;font-size:23.33px;color:#000;font-weight:normal;">System displays error: "Time must be within your designated shift hours."</div>
<div class="t" id="t68" style="left:52px;top:409.65px;font-size:23.33px;color:#000;font-weight:normal;">ER-Dur-Fail</div>
<div class="t" id="t69" style="left:222px;top:409.65px;font-size:23.33px;color:#000;font-weight:normal;">System displays error: "Break duration must not exceed the allowed maximum (e.g., 1 hour)."</div>
<div class="t" id="t70" style="left:52px;top:437.65px;font-size:23.33px;color:#000;font-weight:normal;">ER-Overlap-Fail</div>
<div class="t" id="t71" style="left:222px;top:437.65px;font-size:23.33px;color:#000;font-weight:normal;">System displays error: "Employees cannot submit overlapping break tickets."</div>
<div class="a" style="left:46.5px;top:260.5px;width:171.5px;height:31px;border:2.2px solid #1e6f47"></div>
<div class="a" style="left:214.5px;top:288.5px;width:6px;height:6px;background:#1e6f47;border:1px solid #fff"></div>
<div class="a" style="left:1888px;top:195px;width:15px;height:660px;background:#e8e8e8"></div>
<div class="a" style="left:1903px;top:0px;width:4px;height:986px;background:#f0f0f0"></div>
<svg style="left:1890.5px;top:197.5px;" width="12" height="9" viewBox="0 0 12 9"><path d="M6 1 L11 8 L1 8z" fill="#8a8a8a" stroke="#8a8a8a" stroke-width="1" stroke-linejoin="round"/></svg>
<div class="a" style="left:1892px;top:213px;width:9.5px;height:253px;background:#8a8a8a;border-radius:5px"></div>
<svg style="left:1890.5px;top:827.5px;" width="12" height="9" viewBox="0 0 12 9"><path d="M1 1 L11 1 L6 8z" fill="#8a8a8a" stroke="#8a8a8a" stroke-width="1" stroke-linejoin="round"/></svg>
<div class="a" style="left:0px;top:840px;width:1888px;height:15px;background:#e6e6e6"></div>
<svg style="left:0px;top:841.5px;" width="7" height="12" viewBox="0 0 7 12"><path d="M5.5 1 L5.5 11 L0 6z" fill="#8a8a8a"/></svg>
<div class="a" style="left:12px;top:843px;width:872px;height:9.5px;background:#8a8a8a;border-radius:5px"></div>
<svg style="left:1876.5px;top:841.5px;" width="10" height="12" viewBox="0 0 10 12"><path d="M1 1 L1 11 L8 6z" fill="#8a8a8a" stroke="#8a8a8a" stroke-width="1" stroke-linejoin="round"/></svg>
<div class="a" style="left:0px;top:854px;width:1903px;height:41px;background:#f5f5f5"></div>
<svg style="left:9.5px;top:867.5px;" width="10" height="14" viewBox="0 0 10 14"><path d="M7.5 1 L1.5 7 L7.5 13" fill="none" stroke="#b5b5b5" stroke-width="1.2" stroke-linecap="round" stroke-linejoin="round"/></svg>
<svg style="left:50px;top:867.5px;" width="10" height="14" viewBox="0 0 10 14"><path d="M1.5 1 L7.5 7 L1.5 13" fill="none" stroke="#b5b5b5" stroke-width="1.2" stroke-linecap="round" stroke-linejoin="round"/></svg>
<svg style="left:86px;top:866px;" width="18" height="16" viewBox="0 0 18 16"><path d="M1.5 2.5 h14.5 M1.5 8 h14.5 M1.5 13.5 h14.5" stroke="#424242" stroke-width="1.5" stroke-linecap="round"/></svg>
<div class="t" id="t72" style="left:129px;top:866.49px;font-size:17.5px;color:#424242;font-weight:normal;transform:scaleX(0.9631);">Test Design For Ticketing Sys</div>
<div class="t" id="t73" style="left:377px;top:866.49px;font-size:17.5px;color:#333;font-weight:normal;transform:scaleX(0.9716);-webkit-text-stroke:0.45px #333;">Expected Results Reference</div>
<div class="a" style="left:376px;top:892px;width:216px;height:3px;background:#107c41;border-radius:1.5px"></div>
<div class="t" id="t74" style="left:619px;top:866.49px;font-size:17.5px;color:#424242;font-weight:normal;transform:scaleX(1.0059);">Abbreviations and Definitions</div>
<div class="t" id="t75" style="left:877px;top:866.49px;font-size:17.5px;color:#424242;font-weight:normal;transform:scaleX(0.9770);">Preconditions and Referenc</div>
<svg style="left:1115px;top:866px;" width="15" height="15" viewBox="0 0 15 15"><path d="M7.5 1 v13 M1 7.5 h13" stroke="#424242" stroke-width="1.4" stroke-linecap="round"/></svg>
<div class="a" style="left:0px;top:895px;width:1903px;height:28px;background:#fff;border-top:1px solid #dadada;border-radius:0 0 8px 8px;box-shadow:0 1px 0 #e2e2e2"></div>
<div class="a" style="left:0px;top:923px;width:1907px;height:4px;background:#f0f0f0"></div>
<div class="t" id="t76" style="left:19px;top:904.38px;font-size:15.5px;color:#424242;font-weight:normal;transform:scaleX(0.9571);">Workbook Statistics</div>
<svg style="left:1597.5px;top:910px;" width="11.5" height="5.5" viewBox="0 0 11.5 5.5"><path d="M0.5 0.5 L5.75 5.0 L11.0 0.5" fill="none" stroke="#424242" stroke-width="1.4" stroke-linecap="round" stroke-linejoin="round"/></svg>
<svg style="left:1627px;top:903px;" width="20" height="14" viewBox="0 0 20 14"><rect x="1" y="1" width="17.5" height="12" rx="2" fill="none" stroke="#424242" stroke-width="1.3"/><path d="M4.5 4.5 h1 M8 4.5 h1 M11.5 4.5 h1 M15 4.5 h0.5 M4 7.5 h1 M7 7.5 h1 M10 7.5 h1 M13 7.5 h1 M5 10 h9.5" stroke="#424242" stroke-width="1.2" stroke-linecap="round"/></svg>
<svg style="left:1668px;top:902px;" width="18" height="18" viewBox="0 0 18 18"><circle cx="9" cy="9" r="7.6" fill="none" stroke="#424242" stroke-width="1.3"/><path d="M6.6 7 a2.4 2.4 0 1 1 3.5 2.1 c-.8 .5 -1.1 .9 -1.1 1.8" fill="none" stroke="#424242" stroke-width="1.3" stroke-linecap="round"/><circle cx="9" cy="13.3" r="0.9" fill="#424242"/></svg>
<svg style="left:1707px;top:901px;" width="21" height="18" viewBox="0 0 21 18"><circle cx="6" cy="8" r="2.6" fill="none" stroke="#424242" stroke-width="1.3"/><path d="M1.2 13 h9.5 v1 a4.7 3.3 0 0 1 -9.5 0z" fill="none" stroke="#424242" stroke-width="1.3" stroke-linejoin="round"/><path d="M11 1.3 h7.5 a1.3 1.3 0 0 1 1.3 1.3 v3.5 a1.3 1.3 0 0 1 -1.3 1.3 h-4 l-2.5 2 v-2 a1.3 1.3 0 0 1 -1 -1.3 v-3.5 a1.3 1.3 0 0 1 1.3 -1.3z" fill="none" stroke="#424242" stroke-width="1.2" stroke-linejoin="round"/></svg>
<div class="a" style="left:1749px;top:910.5px;width:14px;height:1.4px;background:#424242"></div>
<div class="a" style="left:1777px;top:898px;width:71px;height:22.5px;border:1px solid #e0e0e0;border-radius:4px;background:#fff"></div>
<div class="t" id="t77" style="left:1783px;top:902.58px;font-size:15.5px;color:#424242;font-weight:normal;transform:scaleX(0.9078);">100%</div>
<svg style="left:1827.5px;top:908px;" width="12.5" height="6.5" viewBox="0 0 12.5 6.5"><path d="M0.5 0.5 L6.25 6.0 L12.0 0.5" fill="none" stroke="#424242" stroke-width="1.4" stroke-linecap="round" stroke-linejoin="round"/></svg>
<svg style="left:1861px;top:903px;" width="16" height="16" viewBox="0 0 16 16"><path d="M8 1 v14 M1 8 h14" stroke="#424242" stroke-width="1.4" stroke-linecap="round"/></svg>
<div class="a" style="left:0px;top:927px;width:1907px;height:59px;background:#eeeeee;border-top:1px solid #d6d6d6"></div>
<div class="a" style="left:17px;top:944px;width:24px;height:24px;border-radius:50%;background:radial-gradient(circle at 35% 30%,#f9c623,#f6a21b 55%,#f07a1a)"></div>
<div class="a" style="left:27.5px;top:934.5px;width:20.5px;height:20.5px;background:#c42b1c;border-radius:50%;border:1px solid #e8e8e8"></div>
<div class="t" id="t78" style="left:33.3px;top:939.65px;font-size:14px;color:#fff;font-weight:normal;transform:scaleX(1.0261);">2</div>
<div class="t" id="t79" style="left:54px;top:940.23px;font-size:14.5px;color:#1a1a1a;font-weight:normal;transform:scaleX(0.9257);">25°C</div>
<div class="t" id="t80" style="left:54px;top:962.50px;font-size:13px;color:#424242;font-weight:normal;transform:scaleX(1.0227);font-family:"Liberation Sans",sans-serif;direction:rtl;unicode-bidi:bidi-override;">مشمس</div>
<svg style="left:601px;top:942px;" width="31" height="31" viewBox="0 0 31 31"><defs><linearGradient id="wg" x1="0" y1="0" x2="1" y2="1"><stop offset="0" stop-color="#4cc2ff"/><stop offset="1" stop-color="#0067c0"/></linearGradient></defs>
<rect x="0.5" y="0.5" width="14" height="14" rx="1" fill="url(#wg)"/><rect x="16" y="0.5" width="14" height="14" rx="1" fill="url(#wg)"/>
<rect x="0.5" y="16" width="14" height="14" rx="1" fill="url(#wg)"/><rect x="16" y="16" width="14" height="14" rx="1" fill="url(#wg)"/></svg>
<div class="a" style="left:649px;top:937.5px;width:271px;height:39px;background:#fafafa;border:1px solid #dedede;border-radius:20px"></div>
<svg style="left:662px;top:947px;" width="21" height="21" viewBox="0 0 21 21"><circle cx="8.5" cy="8.5" r="6.6" fill="none" stroke="#1a1a1a" stroke-width="1.8"/><path d="M13.3 13.3 L18.5 18.5" stroke="#1a1a1a" stroke-width="2" stroke-linecap="round"/></svg>
<div class="t" id="t81" style="left:694px;top:950.69px;font-size:17.5px;color:#5c5c5c;font-weight:normal;transform:scaleX(0.9197);">Search</div>
<svg style="left:860px;top:941px;" width="62" height="36" viewBox="0 0 62 36"><path d="M6 14 L38 11 L37 30 L9 32z" fill="#d7bda0"/><path d="M38 9 L59 7 L60 27 L40 29z" fill="#e3cbad"/>
<circle cx="7" cy="13" r="4" fill="#3d8c25"/><circle cx="13.5" cy="12" r="3.6" fill="#e68f2a"/><circle cx="19.5" cy="10.5" r="3" fill="#2c6a1a"/><circle cx="24.5" cy="11" r="3.2" fill="#e3c02a"/><circle cx="32" cy="12" r="3.5" fill="#e88a2a"/>
<circle cx="42" cy="10" r="3.5" fill="#e8902a"/><circle cx="47.5" cy="8" r="3.2" fill="#e08020"/><circle cx="52" cy="8.5" r="3" fill="#a8c030"/><circle cx="57" cy="7.5" r="3.5" fill="#2f7a1e"/>
<circle cx="10" cy="29" r="6" fill="#e8a030"/><circle cx="12.5" cy="30" r="2.6" fill="#1d6a18"/><circle cx="20" cy="31" r="3" fill="#e49a2a"/>
<circle cx="29" cy="30" r="5" fill="#b89088"/><circle cx="31" cy="32" r="3.3" fill="#3aaac4"/><rect x="37" y="22" width="6" height="12" rx="2" fill="#5ccad8"/>
<ellipse cx="53" cy="28.5" rx="6.5" ry="6" fill="#5a9430"/></svg>
<svg style="left:937px;top:944px;" width="25" height="28" viewBox="0 0 25 28"><rect x="1" y="1" width="22" height="26" rx="2" fill="#f5f5f5"/><rect x="1" y="5" width="9" height="9" fill="#2b2b2b"/><rect x="12" y="5" width="9" height="9" fill="#bdbdbd"/><rect x="1" y="16" width="21" height="10" rx="1" fill="#1f1f1f"/><path d="M6 26 L15 16 h3 l-9 10z" fill="#e6e6e6"/></svg>
<svg style="left:992px;top:942px;" width="31" height="31" viewBox="0 0 31 31"><circle cx="15.5" cy="15.5" r="15" fill="#db4437"/>
<path d="M15.5 15.5 L2.5 8 A15 15 0 0 0 8 28.5z" fill="#0f9d58"/>
<path d="M15.5 15.5 L8 28.5 A15 15 0 0 0 30.5 15.5 L28.5 8z" fill="#f4b400"/>
<path d="M15.5 15.5 L2.5 8 A15 15 0 0 1 28.5 8z" fill="#db4437"/>
<circle cx="15.5" cy="15.5" r="6.8" fill="#fff"/><circle cx="15.5" cy="15.5" r="5.4" fill="#4285f4"/></svg>
<svg style="left:1047px;top:941px;" width="33" height="31" viewBox="0 0 33 31"><defs><linearGradient id="cp1" x1="0" y1="0" x2="0" y2="1"><stop offset="0" stop-color="#1e9cf0"/><stop offset=".35" stop-color="#2fc0a0"/><stop offset=".65" stop-color="#e8d21a"/><stop offset="1" stop-color="#f2551b"/></linearGradient>
<linearGradient id="cp2" x1="0.2" y1="0" x2="0.6" y2="1"><stop offset="0" stop-color="#9a4cf0"/><stop offset=".5" stop-color="#ee5a9a"/><stop offset="1" stop-color="#fb9a4c"/></linearGradient></defs>
<path d="M9 1.5 h9.5 c2 0 3.2 1.2 3.8 3 l1.5 5 h-7.5 l-5 17.5 c-0.6 2 -2 3 -4 3 h-2.5 c-2.5 0 -3.8 -1.6 -3.2 -3.8 l4.6 -19.8 c0.7 -3.3 1.6 -4.9 2.8 -4.9z" fill="url(#cp1)"/>
<path d="M16.5 5 h3.5 c1.5 0 2.5 1 3 2.5 l0.8 2 h-6z" fill="#1a4fd8"/>
<path d="M24 29.5 h-9.5 c-2 0 -3.2 -1.2 -3.8 -3 l-1.5 -5 h7.5 l5 -17.5 c0.6 -2 2 -3 4 -3 h2.5 c2.5 0 3.8 1.6 3.2 3.8 l-4.6 19.8 c-0.7 3.3 -1.6 4.9 -2.8 4.9z" fill="url(#cp2)" transform="translate(0 1)"/>
</svg>
<div class="a" style="left:1094px;top:933px;width:47px;height:48.5px;background:#f7f7f7;border:1px solid #e3e3e3;border-radius:5px"></div>
<svg style="left:1102px;top:941.5px;" width="32" height="32" viewBox="0 0 32 32"><defs><linearGradient id="eg0" x1="0" y1="0" x2="0" y2="1"><stop offset="0" stop-color="#2a9fe6"/><stop offset="1" stop-color="#1168c4"/></linearGradient>
<linearGradient id="eg1" x1="0" y1="0" x2="1" y2="0.6"><stop offset="0" stop-color="#1aa0d8"/><stop offset=".55" stop-color="#2cc0b0"/><stop offset="1" stop-color="#62e25a"/></linearGradient></defs>
<circle cx="16" cy="15.5" r="15" fill="url(#eg0)"/>
<path d="M1.2 14.5 A15 15 0 0 1 31 15 C31 19.5 28 22 24 22 C20.5 22 18.5 20.5 19.5 18.5 C21 15 19 11.5 14.5 11.5 C8.5 11.5 4 13.5 1.2 14.5z" fill="url(#eg1)"/>
<path d="M11 17 C11.5 24 19 29 28.5 23.5 C25 29.5 17 32 10.5 28.5 C7 26 7.5 19.5 11 17z" fill="#0e4a8f"/>
<ellipse cx="16.5" cy="17" rx="3.6" ry="3.2" fill="#fff"/></svg>
<div class="a" style="left:1108px;top:977px;width:21px;height:3px;background:#0067c0;border-radius:2px"></div>
<svg style="left:1157px;top:941px;" width="31" height="32" viewBox="0 0 31 32"><path d="M10 7 v-3 a2 2 0 0 1 2 -2 h7 a2 2 0 0 1 2 2 v3" fill="none" stroke="#4cc2ff" stroke-width="1.8"/>
<path d="M1 7 h29 v20 a4 4 0 0 1 -4 4 h-21 a4 4 0 0 1 -4 -4z" fill="#0f4a8a"/>
<rect x="9" y="14" width="6" height="6" fill="#f25022"/><rect x="16" y="14" width="6" height="6" fill="#7fba00"/><rect x="9" y="21" width="6" height="6" fill="#00a4ef"/><rect x="16" y="21" width="6" height="6" fill="#ffb900"/></svg>
<svg style="left:1216px;top:946px;" width="22" height="22" viewBox="0 0 22 22"><circle cx="9" cy="9" r="6.8" fill="none" stroke="#0f6cbd" stroke-width="2.6"/><path d="M14 14 L20 20" stroke="#0f6cbd" stroke-width="3" stroke-linecap="round"/></svg>
<svg style="left:1266px;top:943px;" width="33" height="29" viewBox="0 0 33 29"><path d="M1 3 a2 2 0 0 1 2 -2 h8 l3 3 h16 a2 2 0 0 1 2 2 v3 h-31z" fill="#e8b32a"/>
<rect x="1" y="6" width="31" height="22" rx="2" fill="#ffd44f"/>
<rect x="9" y="18" width="16" height="6" rx="1" fill="#1f6fc5"/></svg>
<svg style="left:1534px;top:953px;" width="16" height="9" viewBox="0 0 16 9"><path d="M1.5 7.5 L8 1.5 L14.5 7.5" fill="none" stroke="#1a1a1a" stroke-width="1.6" stroke-linecap="round" stroke-linejoin="round"/></svg>
<svg style="left:1572px;top:947px;" width="20" height="21" viewBox="0 0 20 21"><g fill="none" stroke="#8a8fa0" stroke-width="1.1"><path d="M2 6 a8.5 8.5 0 0 1 14 0"/><path d="M4.5 8.5 a5.5 5.5 0 0 1 9 0"/><circle cx="9" cy="13" r="5"/></g><circle cx="13.5" cy="16" r="4" fill="#e81123"/></svg>
<svg style="left:1611px;top:948px;" width="23" height="16" viewBox="0 0 23 16"><defs><linearGradient id="od" x1="0" y1="0" x2="1" y2="0"><stop offset="0" stop-color="#a0a0a0"/><stop offset=".5" stop-color="#e0e0e0"/><stop offset="1" stop-color="#c0c0c0"/></linearGradient></defs><path d="M5 15 a4.5 4.5 0 0 1 0 -9 a6.5 6.5 0 0 1 12 -1 a5 5 0 0 1 1 10z" fill="url(#od)" stroke="#555" stroke-width="1.2"/></svg>
<div class="t" id="t82" style="left:1656px;top:950.83px;font-size:14.5px;color:#1a1a1a;font-weight:normal;transform:scaleX(0.8911);">ENG</div>
<svg style="left:1706px;top:948px;" width="22" height="17" viewBox="0 0 22 17"><g fill="none" stroke="#1a1a1a" stroke-width="1.6" stroke-linecap="round"><path d="M1.5 5.5 a13 13 0 0 1 19 0"/><path d="M4.8 8.8 a8.5 8.5 0 0 1 12.4 0"/><path d="M8 12 a4 4 0 0 1 6 0"/></g><circle cx="11" cy="15" r="1.5" fill="#1a1a1a"/></svg>
<svg style="left:1736px;top:947px;" width="22" height="18" viewBox="0 0 22 18"><path d="M1.5 6 h3.5 l5 -4.5 v15 l-5 -4.5 h-3.5z" fill="none" stroke="#1a1a1a" stroke-width="1.3" stroke-linejoin="round"/><g fill="none" stroke="#1a1a1a" stroke-width="1.3" stroke-linecap="round"><path d="M13 6 a3.5 3.5 0 0 1 0 6"/><path d="M15.5 3.5 a7 7 0 0 1 0 11"/><path d="M18 1.5 a10 10 0 0 1 0 15"/></g></svg>
<svg style="left:1765px;top:946px;" width="24" height="19" viewBox="0 0 24 19"><path d="M6.5 5 h11.5 a2 2 0 0 1 2 2 v8 a2 2 0 0 1 -2 2 h-13.5 a2 2 0 0 1 -2 -2 v-1" fill="none" stroke="#1a1a1a" stroke-width="1.3"/><rect x="20.3" y="8.5" width="2" height="5" rx="1" fill="#1a1a1a"/><path d="M2.5 15.5 C1.5 10 4 4.5 9 1 C10.5 5.5 10 11 6.5 14.5 z" fill="#1a1a1a"/><path d="M3.5 15 L9 8.5" stroke="#eeeeee" stroke-width="0.9"/></svg>
<div class="t" id="t83" style="left:1832px;top:939.06px;font-size:15.4px;color:#1a1a1a;font-weight:normal;transform:scaleX(0.9158);">3:27 PM</div>
<div class="t" id="t84" style="left:1808px;top:959.06px;font-size:15.4px;color:#1a1a1a;font-weight:normal;transform:scaleX(0.9931);">10/17/2025</div>
<svg style="left:835px;top:865px;" width="240" height="121" viewBox="0 0 240 121"><g fill="#9c9c9c" opacity="0.26">
<path d="M41.5 27 h-15 a14 14 0 0 0 -14 14 v8 a14 14 0 0 0 14 14 h197.5 v-10 h-194.5 a3 3 0 0 1 -3 -3 v-9.2 a3 3 0 0 1 3 -3 h12 a5.4 5.4 0 0 0 0 -10.8z"/>
<path d="M57.6 27 h30.4 v10.8 h-17.5 v15.2 h-12.9z"/>
<rect x="97" y="12.6" width="10.5" height="40.4" rx="1.5"/>
<path d="M118 32.7 h26.7 v20.3 h-11.3 v-11.5 h-15.4z"/>
<circle cx="129.6" cy="20.8" r="4.4"/>
<path d="M185.6 35 a14 14 0 0 1 14 14 v4 h-28 v-4 a14 14 0 0 1 14 -14z M185.6 43.3 a5.7 5.7 0 1 0 0.01 0z" fill-rule="evenodd"/>
<rect x="211.5" y="25" width="12.5" height="28" rx="1.5"/>
<circle cx="186.2" cy="17.6" r="5.7"/><circle cx="219" cy="20" r="5.7"/>
</g>
<text x="23" y="111" font-family="Liberation Sans" font-weight="bold" font-size="27" fill="#d8d8d8" opacity="0.6" textLength="185" lengthAdjust="spacingAndGlyphs">nafezly.com</text></svg>
<div class="a" style="left:1422px;top:65px;width:118px;height:30px;background:#fff;border:1px solid #d6d6d6;border-radius:5px"></div>
<svg style="left:1433px;top:71px;" width="20" height="18" viewBox="0 0 20 18"><path d="M3.5 1.2 h12.5 a2.5 2.5 0 0 1 2.5 2.5 v7.3 a2.5 2.5 0 0 1 -2.5 2.5 h-8 l-3.8 3.3 v-3.3 h-0.7 a2.5 2.5 0 0 1 -2.5 -2.5 v-7.3 a2.5 2.5 0 0 1 2.5 -2.5z" fill="none" stroke="#424242" stroke-width="1.3" stroke-linejoin="round"/></svg>
<div class="t" id="t85" style="left:1458.5px;top:72.71px;font-size:15.7px;color:#242424;font-weight:normal;transform:scaleX(0.9361);">Comments</div>
<div class="a" style="left:1551.5px;top:65px;width:105px;height:30px;background:#fff;border:1px solid #d6d6d6;border-radius:5px"></div>
<svg style="left:1562px;top:74px;" width="20" height="12" viewBox="0 0 20 12"><path d="M1.5 6.5 h2.5 l2.5 -4 l3.5 7 l2.5 -4 h3" fill="none" stroke="#242424" stroke-width="1.5" stroke-linecap="round" stroke-linejoin="round"/><circle cx="2" cy="6.5" r="1.6" fill="#242424"/><circle cx="17.5" cy="5.5" r="1.6" fill="#242424"/></svg>
<div class="t" id="t86" style="left:1587px;top:72.71px;font-size:15.7px;color:#242424;font-weight:normal;transform:scaleX(0.9316);">Catch up</div>
<div class="a" style="left:1667px;top:65px;width:112px;height:30px;background:#fff;border:1px solid #d6d6d6;border-radius:5px"></div>
<svg style="left:1678px;top:70px;" width="20" height="20" viewBox="0 0 20 20"><path d="M13.5 2.5 a2.3 2.3 0 0 1 3.3 3.3 l-10.5 10.5 l-4.5 1.2 l1.2 -4.5z" fill="none" stroke="#424242" stroke-width="1.3" stroke-linejoin="round"/><path d="M12 4 l3.3 3.3" stroke="#424242" stroke-width="1.2"/></svg>
<div class="t" id="t87" style="left:1703px;top:72.71px;font-size:15.7px;color:#242424;font-weight:normal;transform:scaleX(0.9485);">Editing</div>
<svg style="left:1754.5px;top:78px;" width="12.5" height="6.5" viewBox="0 0 12.5 6.5"><path d="M0.5 0.5 L6.25 6.0 L12.0 0.5" fill="none" stroke="#424242" stroke-width="1.4" stroke-linecap="round" stroke-linejoin="round"/></svg>
<div class="a" style="left:1790px;top:65px;width:104px;height:30px;background:#107c41;border-radius:5px"></div>
<svg style="left:1801px;top:71px;" width="21" height="18" viewBox="0 0 21 18"><circle cx="7" cy="4.5" r="3.2" fill="none" stroke="#fff" stroke-width="1.3"/><path d="M1.3 10 h11.5 v1.8 a5.7 4.8 0 0 1 -11.5 0z" fill="none" stroke="#fff" stroke-width="1.3" stroke-linejoin="round"/><circle cx="15.5" cy="6" r="2.4" fill="none" stroke="#fff" stroke-width="1.2"/><path d="M14.5 10.8 h4.8 v1 a3.5 3.2 0 0 1 -4.8 3.2" fill="none" stroke="#fff" stroke-width="1.2"/></svg>
<div class="t" id="t88" style="left:1825.5px;top:72.71px;font-size:15.7px;color:#fff;font-weight:normal;transform:scaleX(0.9075);-webkit-text-stroke:0.4px #fff;">Share</div>
<svg style="left:1869px;top:78px;" width="12.5" height="6.5" viewBox="0 0 12.5 6.5"><path d="M0.5 0.5 L6.25 6.0 L12.0 0.5" fill="none" stroke="#fff" stroke-width="1.4" stroke-linecap="round" stroke-linejoin="round"/></svg>
</body></html>
